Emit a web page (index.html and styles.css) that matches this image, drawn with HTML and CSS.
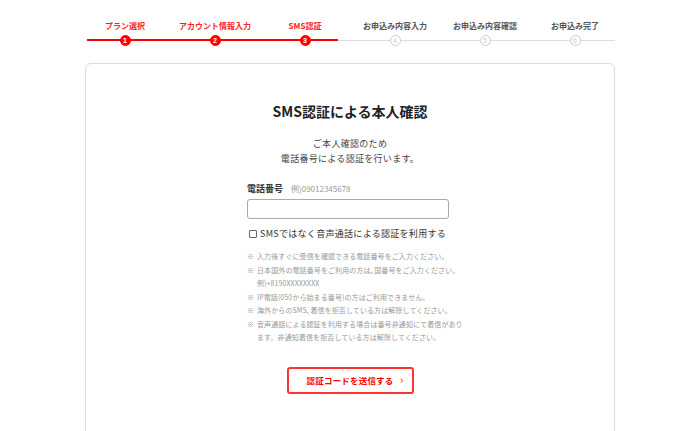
FILE: index.html
```html
<!DOCTYPE html>
<html lang="ja">
<head>
  <meta charset="UTF-8" />
  <meta name="viewport" content="width=device-width, initial-scale=1.0"/>
  <title>SMS認証による本人確認</title>
  <link rel="stylesheet" href="styles.css">
</head>
<body>

  <!-- Step bar -->
  <ol class="steps">
    <li class="step done"><span class="step-label">プラン選択</span><span class="step-num">1</span></li>
    <li class="step done"><span class="step-label">アカウント情報入力</span><span class="step-num">2</span></li>
    <li class="step done current"><span class="step-label">SMS認証</span><span class="step-num">3</span></li>
    <li class="step"><span class="step-label">お申込み内容入力</span><span class="step-num">4</span></li>
    <li class="step"><span class="step-label">お申込み内容確認</span><span class="step-num">5</span></li>
    <li class="step"><span class="step-label">お申込み完了</span><span class="step-num">6</span></li>
  </ol>

  <!-- Card -->
  <div class="card">
    <h1>SMS認証による本人確認</h1>
    <p class="lead">ご本人確認のため<br>電話番号による認証を行います。</p>

    <form class="form">
      <div class="field-head">
        <label for="tel" class="field-label">電話番号</label>
        <span class="field-hint">例)09012345678</span>
      </div>
      <input type="tel" id="tel" class="field-input" />

      <label class="check">
        <input type="checkbox" />
        <span>SMSではなく音声通話による認証を利用する</span>
      </label>

      <ul class="notes">
        <li>入力後すぐに受信を確認できる電話番号をご入力ください。</li>
        <li>日本国外の電話番号をご利用の方は､国番号をご入力ください。<br>例)+8190XXXXXXXX</li>
        <li>IP電話(050から始まる番号)の方はご利用できません。</li>
        <li>海外からのSMS､着信を拒否している方は解除してください。</li>
        <li>音声通話による認証を利用する場合は番号非通知にて着信があります。非通知着信を拒否している方は解除してください。</li>
      </ul>

      <div class="actions">
        <button type="submit" class="btn">認証コードを送信する<span class="btn-arrow">&rsaquo;</span></button>
      </div>
    </form>
  </div>

</body>
</html>
```

FILE: styles.css
```css
body {
  font-family: "Noto Sans CJK JP", "Noto Sans", sans-serif;
  margin: 0;
  padding: 20px 0 0;
  background-color: #fff;
  color: #333;
}

.steps {
  display: grid;
  grid-template-columns: repeat(6, 90px);
  width: 540px;
  margin: 0 auto;
  padding: 0;
  list-style: none;
  position: relative;
}

.steps::before {
  content: "";
  position: absolute;
  left: 7px;
  right: 5px;
  top: 20px;
  height: 1px;
  background-color: #ddd;
}

.steps::after {
  content: "";
  position: absolute;
  left: 7px;
  width: 251px;
  top: 19px;
  height: 2px;
  background-color: #f00;
}

.step {
  display: flex;
  flex-direction: column;
  align-items: center;
  gap: 3px;
  position: relative;
  z-index: 1;
}

.step-label {
  font-size: 8px;
  font-weight: bold;
  line-height: 12px;
  color: #555;
  white-space: nowrap;
}

.step-num {
  width: 9px;
  height: 9px;
  border: 1px solid #ccc;
  border-radius: 50%;
  background-color: #fff;
  color: #ccc;
  font-size: 7px;
  line-height: 9px;
  text-align: center;
  font-family: "Liberation Sans", sans-serif;
}

.step.done .step-label {
  color: #f22;
}

.step.done .step-num {
  border-color: #f00;
  background-color: #f00;
  color: #fff;
  font-weight: bold;
}

.card {
  width: 530px;
  min-height: 400px;
  margin: 17px auto 0;
  border: 1px solid #ddd;
  border-radius: 6px;
  box-sizing: border-box;
  padding: 36px 0 0;
}

h1 {
  text-align: center;
  font-size: 14px;
  font-weight: bold;
  color: #222;
  margin: 0 0 14px;
  line-height: 22px;
}

.lead {
  text-align: center;
  font-size: 9px;
  line-height: 15px;
  letter-spacing: 0.3px;
  color: #444;
  margin: 0 0 16px;
}

.form {
  width: 202px;
  margin: 0 auto;
  padding-right: 4px;
}

.field-head {
  display: flex;
  align-items: baseline;
  gap: 8px;
  margin-bottom: 4px;
}

.field-label {
  font-size: 9px;
  font-weight: bold;
  color: #333;
}

.field-hint {
  font-size: 8px;
  color: #999;
}

.field-input {
  display: block;
  width: 100%;
  height: 20px;
  box-sizing: border-box;
  border: 1px solid #aaa;
  border-radius: 3px;
  margin: 0;
}

.check {
  display: flex;
  align-items: center;
  gap: 3px;
  margin: 8px 0 10px 2px;
  font-size: 9px;
  color: #333;
  letter-spacing: 0.3px;
}

.check input {
  width: 8px;
  height: 8px;
  margin: 0;
  appearance: none;
  border: 1px solid #666;
  border-radius: 1px;
}

.notes {
  list-style: none;
  margin: 0;
  padding: 0;
  font-size: 7px;
  line-height: 13.5px;
  color: #999;
  width: 218px;
  letter-spacing: 0.1px;
}

.notes li {
  position: relative;
  padding-left: 10px;
}

.notes li::before {
  content: "\203B";
  position: absolute;
  left: 0;
  color: #999;
  font-family: "Noto Sans CJK JP", sans-serif;
}

.actions {
  display: flex;
  justify-content: center;
  margin-top: 22px;
  padding-left: 4px;
}

.btn {
  position: relative;
  width: 127px;
  height: 27px;
  background-color: #fff;
  color: #f00;
  border: 2px solid #f33;
  border-radius: 3px;
  font-family: inherit;
  font-size: 8.5px;
  font-weight: bold;
  letter-spacing: 0.2px;
  cursor: pointer;
}

.btn-arrow {
  position: absolute;
  right: 8px;
  top: 50%;
  transform: translateY(-55%);
  font-size: 11px;
  font-weight: normal;
}
```
